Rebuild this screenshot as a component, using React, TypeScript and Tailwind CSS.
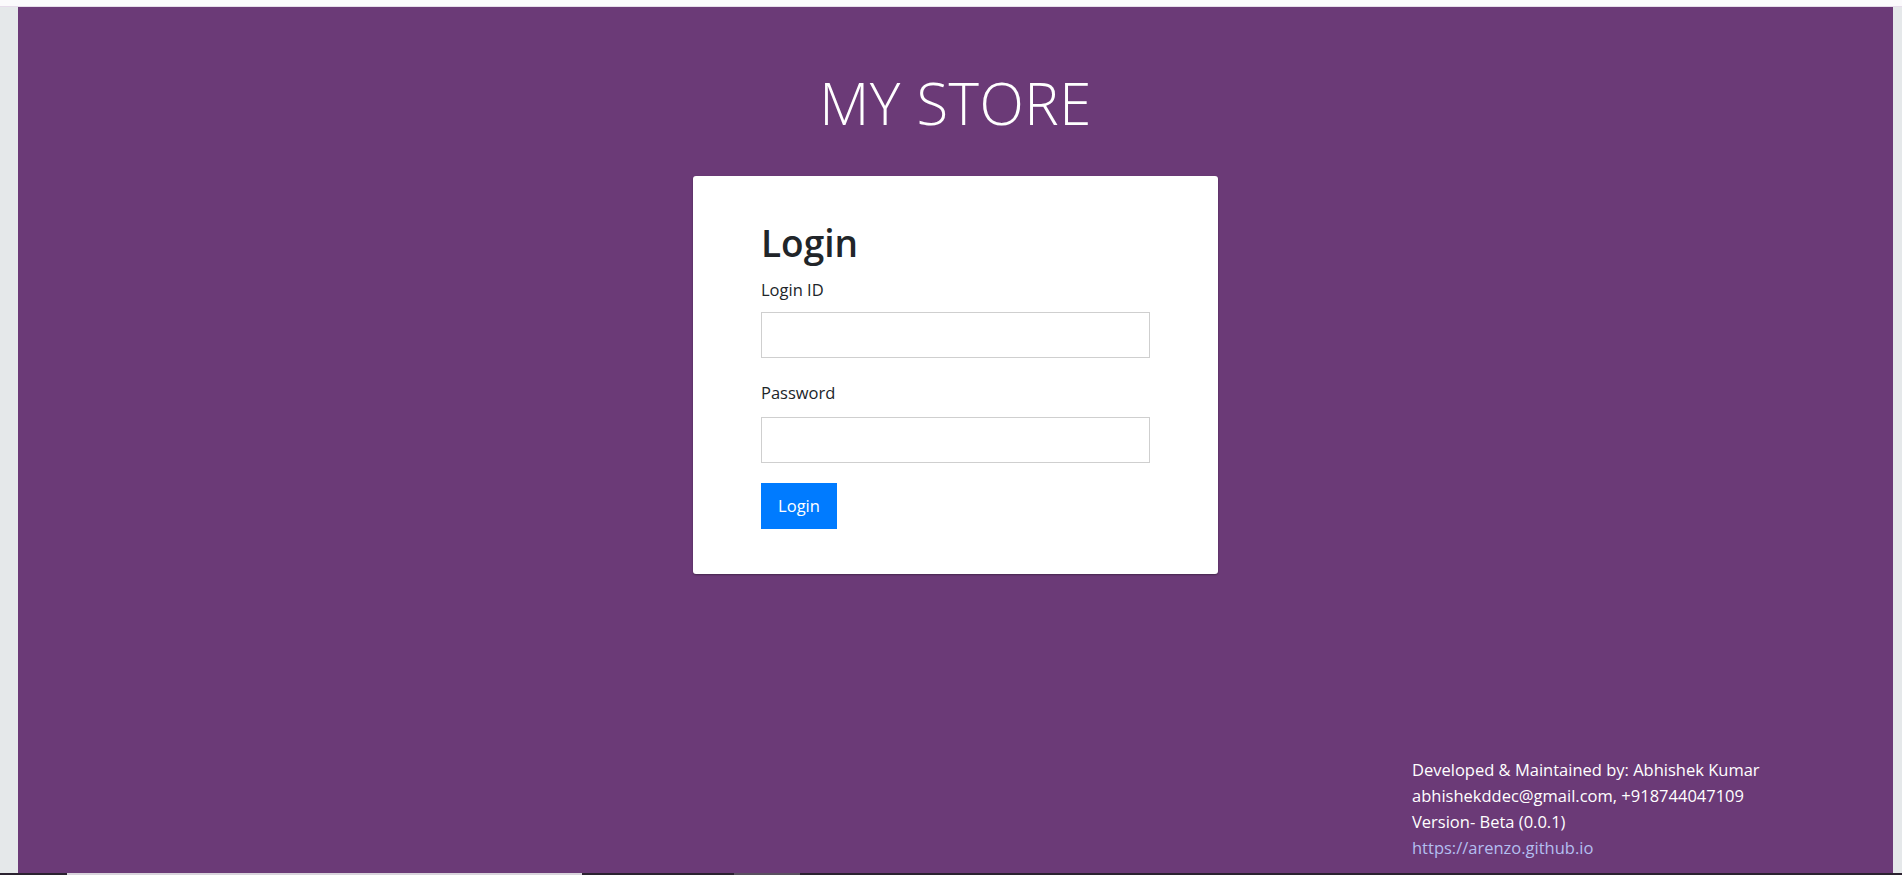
export default function App() {
  return (
    <div className="h-[875px] w-full flex flex-col overflow-hidden font-['Open_Sans','Noto_Sans',sans-serif]">
      <div className="h-[7px] bg-[#fbfafc] border-b border-[#e6dcea]" />
      <div className="flex flex-1 min-h-0">
        <div className="w-[18px] bg-[#e5e8ea]" />
        <main className="flex-1 bg-[#6b3a77] flex flex-col">
          <h1 className="mt-[66px] text-center text-white text-[58px] leading-[60px] font-light tracking-[0.5px]">
            MY STORE
          </h1>

          <div className="flex justify-center mt-[43px]">
            <div className="w-[525px] bg-white rounded-[3px] shadow-[0_1px_2px_rgba(0,0,0,0.35)] px-[68px] pt-[47px] pb-[45px]">
              <h2 className="text-[37px] leading-[40px] font-semibold text-[#212529]">Login</h2>
              <form className="mt-[16px]">
                <label className="block text-[16.5px] leading-[22px] text-[#212529]">Login ID</label>
                <input
                  type="text"
                  className="mt-[11px] block w-full h-[46px] border border-[#cfcfcf] bg-white outline-none"
                />
                <label className="block mt-[24px] text-[16.5px] leading-[22px] text-[#212529]">Password</label>
                <input
                  type="password"
                  className="mt-[13px] block w-full h-[46px] border border-[#cfcfcf] bg-white outline-none"
                />
                <button
                  type="button"
                  className="mt-[20px] h-[46px] w-[76px] bg-[#007bff] text-white text-[16.5px]"
                >
                  Login
                </button>
              </form>
            </div>
          </div>

          <footer className="mt-auto ml-[1394px] mb-[12px] text-white text-[16.5px] leading-[26px] whitespace-nowrap">
            <p>Developed &amp; Maintained by: Abhishek Kumar</p>
            <p>abhishekddec@gmail.com, +918744047109</p>
            <p>Version- Beta (0.0.1)</p>
            <a href="#" className="text-[#b3bff0]">https://arenzo.github.io</a>
          </footer>
        </main>
        <div className="w-[9px] bg-[#e5e8ea]" />
      </div>
      <div className="h-[2px] flex bg-[#2b2230]">
        <div className="w-[67px]" />
        <div className="w-[515px] bg-[#d9d4dc]" />
        <div className="w-[152px]" />
        <div className="w-[66px] bg-[#5a5060]" />
      </div>
    </div>
  );
}
